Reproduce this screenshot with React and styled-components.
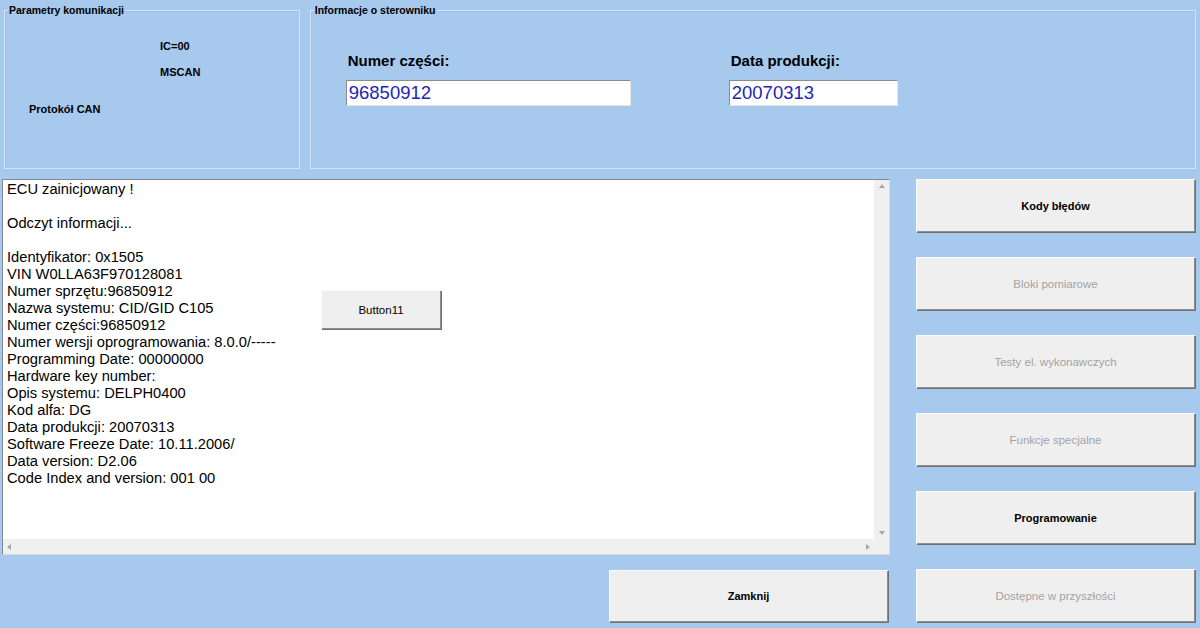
import React from "react";
import styled, { createGlobalStyle } from "styled-components";

const Global = createGlobalStyle`
  html, body { margin: 0; padding: 0; }
  body { background: #a7c9ee; font-family: "Liberation Sans", Arial, sans-serif; }
`;

const Window = styled.div`
  width: 1200px;
  height: 628px;
  background: #a7c9ee;
  overflow: hidden;
  display: flex;
  flex-direction: column;
`;

const TopRow = styled.div`
  display: flex;
  gap: 10px;
  padding: 4px 4px 0 4px;
  height: 165px;
`;

const Group = styled.fieldset`
  margin: 0;
  padding: 0;
  min-width: 0;
  width: ${(p) => p.$w}px;
  box-sizing: border-box;
  border: 1px solid #d4e3f5;
  box-shadow: inset 1px 1px 0 #9fbfe3;
  display: flex;
  flex-direction: column;
`;

const Caption = styled.legend`
  margin-left: 3px;
  padding: 0 1px;
  font-size: 10.5px;
  line-height: 13px;
  font-weight: bold;
  color: #000;
`;

const LabelStack = styled.div`
  display: flex;
  flex-direction: column;
  padding-top: 23px;
`;

const InfoLabel = styled.div`
  font-size: 11px;
  line-height: 13px;
  font-weight: bold;
  color: #000;
  margin-left: ${(p) => p.$indent}px;
  margin-top: ${(p) => p.$gap || 0}px;
`;

const FieldRow = styled.div`
  display: flex;
  gap: 98px;
  padding: 35px 0 0 35px;
`;

const Field = styled.div`
  display: flex;
  flex-direction: column;
  width: ${(p) => p.$w}px;
`;

const FieldLabel = styled.div`
  font-size: 15px;
  line-height: 18px;
  font-weight: bold;
  color: #000;
  margin-left: 2px;
  margin-bottom: 10px;
`;

const ValueBox = styled.div`
  height: 26px;
  box-sizing: border-box;
  background: #fff;
  border-top: 1px solid #8c8c8c;
  border-left: 1px solid #8c8c8c;
  border-right: 1px solid #e6e6e6;
  border-bottom: 1px solid #e6e6e6;
  font-size: 18.5px;
  line-height: 24px;
  color: #2424bb;
  padding-left: 2px;
`;

const Main = styled.div`
  display: flex;
  gap: 26px;
  padding: 10px 0 0 2px;
`;

const LeftCol = styled.div`
  width: 888px;
  display: flex;
  flex-direction: column;
`;

const Memo = styled.div`
  position: relative;
  height: 376px;
  box-sizing: border-box;
  background: #fff;
  border-top: 1px solid #828790;
  border-left: 1px solid #828790;
  border-right: 1px solid #dadada;
  border-bottom: 1px solid #dadada;
  display: grid;
  grid-template-columns: 1fr 15px;
  grid-template-rows: 1fr 15px;
`;

const MemoText = styled.div`
  padding: 1px 0 0 4px;
  font-size: 14.7px;
  line-height: 17px;
  color: #000;
  white-space: pre;
  overflow: hidden;
`;

const ScrollV = styled.div`
  background: #f0f0f0;
  display: flex;
  flex-direction: column;
  justify-content: space-between;
  align-items: center;
  padding: 4px 0;
`;

const ScrollH = styled.div`
  background: #f0f0f0;
  display: flex;
  justify-content: space-between;
  align-items: center;
  padding: 0 4px;
`;

const Corner = styled.div`
  background: #f0f0f0;
`;

const Arrow = styled.span`
  width: 0;
  height: 0;
  border: 3px solid transparent;
  ${(p) =>
    p.$dir === "up"
      ? "border-bottom: 4px solid #a8a8a8; border-top-width: 0;"
      : p.$dir === "down"
      ? "border-top: 4px solid #a8a8a8; border-bottom-width: 0;"
      : p.$dir === "left"
      ? "border-right: 4px solid #a8a8a8; border-left-width: 0;"
      : "border-left: 4px solid #a8a8a8; border-right-width: 0;"}
`;

const Button = styled.button`
  width: ${(p) => p.$w}px;
  height: ${(p) => p.$h}px;
  margin: 0;
  padding: 0;
  background: #efefef;
  border: none;
  box-shadow: inset 1px 1px 0 #fafafa, inset -1px -1px 0 #8f8f8f, 1px 1px 0 #707070;
  font-family: "Liberation Sans", Arial, sans-serif;
  font-size: ${(p) => (p.$bold ? "11px" : "11.5px")};
  font-weight: ${(p) => (p.$bold ? "bold" : "normal")};
  color: ${(p) => (p.$disabled ? "#a3a3a3" : "#000")};
  cursor: default;
`;

const FloatingButton = styled(Button)`
  position: absolute;
  left: 318px;
  top: 110px;
`;

const BottomRow = styled.div`
  display: flex;
  justify-content: flex-end;
  margin-top: 15px;
  padding-right: 2px;
`;

const RightCol = styled.div`
  display: flex;
  flex-direction: column;
  gap: 25px;
  width: 280px;
`;

const memoLines = [
  "ECU zainicjowany !",
  "",
  "Odczyt informacji...",
  "",
  "Identyfikator: 0x1505",
  "VIN W0LLA63F970128081",
  "Numer sprzętu:96850912",
  "Nazwa systemu: CID/GID C105",
  "Numer części:96850912",
  "Numer wersji oprogramowania: 8.0.0/-----",
  "Programming Date: 00000000",
  "Hardware key number:",
  "Opis systemu: DELPH0400",
  "Kod alfa: DG",
  "Data produkcji: 20070313",
  "Software Freeze Date: 10.11.2006/",
  "Data version: D2.06",
  "Code Index and version: 001 00",
];

const actions = [
  { label: "Kody błędów", enabled: true },
  { label: "Bloki pomiarowe", enabled: false },
  { label: "Testy el. wykonawczych", enabled: false },
  { label: "Funkcje specjalne", enabled: false },
  { label: "Programowanie", enabled: true },
  { label: "Dostępne w przyszłości", enabled: false },
];

export default function App() {
  return (
    <Window>
      <Global />
      <TopRow>
        <Group $w={296}>
          <Caption>Parametry komunikacji</Caption>
          <LabelStack>
            <InfoLabel $indent={155}>IC=00</InfoLabel>
            <InfoLabel $indent={155} $gap={13}>MSCAN</InfoLabel>
            <InfoLabel $indent={24} $gap={24}>Protokół CAN</InfoLabel>
          </LabelStack>
        </Group>
        <Group $w={887}>
          <Caption>Informacje o sterowniku</Caption>
          <FieldRow>
            <Field $w={285}>
              <FieldLabel>Numer części:</FieldLabel>
              <ValueBox>96850912</ValueBox>
            </Field>
            <Field $w={169}>
              <FieldLabel>Data produkcji:</FieldLabel>
              <ValueBox>20070313</ValueBox>
            </Field>
          </FieldRow>
        </Group>
      </TopRow>
      <Main>
        <LeftCol>
          <Memo>
            <MemoText>{memoLines.join("\n")}</MemoText>
            <ScrollV>
              <Arrow $dir="up" />
              <Arrow $dir="down" />
            </ScrollV>
            <ScrollH>
              <Arrow $dir="left" />
              <Arrow $dir="right" />
            </ScrollH>
            <Corner />
            <FloatingButton $w={120} $h={39}>Button11</FloatingButton>
          </Memo>
          <BottomRow>
            <Button $w={279} $h={52} $bold>Zamknij</Button>
          </BottomRow>
        </LeftCol>
        <RightCol>
          {actions.map((a) => (
            <Button key={a.label} $w={279} $h={53} $bold={a.enabled} $disabled={!a.enabled}>
              {a.label}
            </Button>
          ))}
        </RightCol>
      </Main>
    </Window>
  );
}
